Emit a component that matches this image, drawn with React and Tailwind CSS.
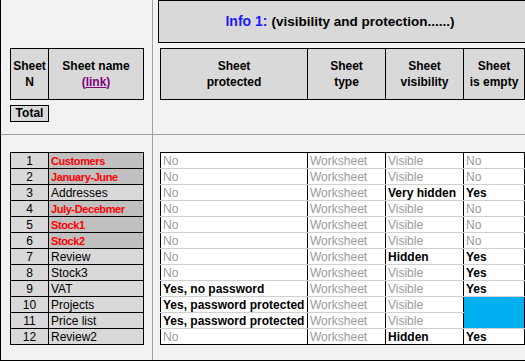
import React from 'react'

const rows = [
  { n: 1, name: 'Customers', red: true, prot: 'No', vis: 'Visible', empty: 'No' },
  { n: 2, name: 'January-June', red: true, prot: 'No', vis: 'Visible', empty: 'No' },
  { n: 3, name: 'Addresses', prot: 'No', vis: 'Very hidden', visBold: true, empty: 'Yes', emptyBold: true },
  { n: 4, name: 'July-Decebmer', red: true, prot: 'No', vis: 'Visible', empty: 'No' },
  { n: 5, name: 'Stock1', red: true, prot: 'No', vis: 'Visible', empty: 'No' },
  { n: 6, name: 'Stock2', red: true, prot: 'No', vis: 'Visible', empty: 'No' },
  { n: 7, name: 'Review', prot: 'No', vis: 'Hidden', visBold: true, empty: 'Yes', emptyBold: true },
  { n: 8, name: 'Stock3', prot: 'No', vis: 'Visible', empty: 'Yes', emptyBold: true },
  { n: 9, name: 'VAT', prot: 'Yes, no password', protBold: true, vis: 'Visible', empty: 'Yes', emptyBold: true },
  { n: 10, name: 'Projects', prot: 'Yes, password protected', protBold: true, vis: 'Visible', empty: 'blue' },
  { n: 11, name: 'Price list', prot: 'Yes, password protected', protBold: true, vis: 'Visible', empty: 'skip' },
  { n: 12, name: 'Review2', prot: 'No', vis: 'Hidden', visBold: true, empty: 'Yes', emptyBold: true },
]

const gray = 'text-[#9a9a9a]'
const bold = 'font-bold text-black'

export default function App() {
  return (
    <div className="w-[525px] h-[361px] bg-[#f2f2f2] border-l border-b border-black flex flex-col font-['Liberation_Sans',Arial,sans-serif] text-[12px] leading-[15px] text-black overflow-hidden">
      {/* top band */}
      <div className="flex h-[135px] border-b border-[#a0a0a0] shrink-0">
        <div className="w-[152px] border-r border-[#a0a0a0] pt-[48px] pl-[9px]">
          <table className="border-collapse table-fixed w-[134px] bg-[#d9d9d9] font-bold">
            <tbody>
              <tr className="h-[51px]">
                <td className="w-[38px] border border-black text-center leading-[16px] p-0">Sheet<br />N</td>
                <td className="border border-black text-center leading-[16px] p-0">
                  Sheet name<br />
                  <span className="text-[#800080]">(<span className="underline">link</span>)</span>
                </td>
              </tr>
            </tbody>
          </table>
          <div className="mt-[5px] w-[39px] h-[17px] border border-black bg-[#d9d9d9] font-bold text-center leading-[15px]">Total</div>
        </div>
        <div className="flex-1 pl-[5px]">
          <div className="h-[43px] border-t border-l border-b border-black bg-[#d9d9d9] flex items-center justify-center pr-[4px] font-bold">
            <span className="text-[14px] text-[#1a1aff] mr-[4px]">Info 1:</span>
            <span className="text-[13.5px]">(visibility and protection......)</span>
          </div>
          <table className="ml-[2px] mt-[5px] border-collapse table-fixed w-[365px] bg-[#d9d9d9] font-bold">
            <tbody>
              <tr className="h-[51px]">
                <td className="w-[147px] border border-black text-center leading-[16px] p-0">Sheet<br />protected</td>
                <td className="w-[78px] border border-black text-center leading-[16px] p-0">Sheet<br />type</td>
                <td className="w-[78px] border border-black text-center leading-[16px] p-0">Sheet<br />visibility</td>
                <td className="border border-black text-center leading-[16px] p-0">Sheet<br />is empty</td>
              </tr>
            </tbody>
          </table>
        </div>
      </div>

      {/* data band */}
      <div className="flex flex-1">
        <div className="w-[152px] border-r border-[#a0a0a0] pt-[17px] pl-[9px]">
          <table className="border-collapse table-fixed w-[134px]">
            <tbody>
              {rows.map((r) => (
                <tr key={r.n} className="h-[16px]">
                  <td className="w-[38px] border border-black bg-[#d9d9d9] text-center p-0 leading-[14px]">{r.n}</td>
                  <td
                    className={
                      r.red
                        ? "border border-black bg-[#c0c0c0] px-[2px] py-0 leading-[14px] text-[#ff0000] font-bold text-[11px] tracking-[-0.4px]"
                        : "border border-black bg-[#d9d9d9] px-[2px] py-0 leading-[14px]"
                    }
                  >
                    {r.name}
                  </td>
                </tr>
              ))}
            </tbody>
          </table>
        </div>
        <div className="flex-1 pt-[17px] pl-[7px]">
          <table className="border-collapse table-fixed w-[365px] bg-white">
            <tbody>
              {rows.map((r, i) => {
                const rowLine = i === 11 ? 'border-b-black' : 'border-b-[#d0d0d0]'
                return (
                  <tr key={r.n} className="h-[16px]">
                    <td className={`w-[147px] border-l border-r border-black border-b ${rowLine} ${i === 0 ? 'border-t' : ''} px-[2px] py-0 leading-[14px] ${r.protBold ? bold : gray}`}>{r.prot}</td>
                    <td className={`w-[78px] border-r border-black border-b ${rowLine} ${i === 0 ? 'border-t' : ''} px-[2px] py-0 leading-[14px] ${gray}`}>Worksheet</td>
                    <td className={`w-[78px] border-r border-black border-b ${rowLine} ${i === 0 ? 'border-t' : ''} px-[2px] py-0 leading-[14px] ${r.visBold ? bold : gray}`}>{r.vis}</td>
                    {r.empty === 'skip' ? null : r.empty === 'blue' ? (
                      <td rowSpan={2} className="border-r border-black border-b border-b-[#d0d0d0] bg-[#00b0f0] p-0"></td>
                    ) : (
                      <td className={`border-r border-black border-b ${rowLine} ${i === 0 ? 'border-t' : ''} px-[2px] py-0 leading-[14px] ${r.emptyBold ? bold : gray}`}>{r.empty}</td>
                    )}
                  </tr>
                )
              })}
            </tbody>
          </table>
        </div>
      </div>
    </div>
  )
}
